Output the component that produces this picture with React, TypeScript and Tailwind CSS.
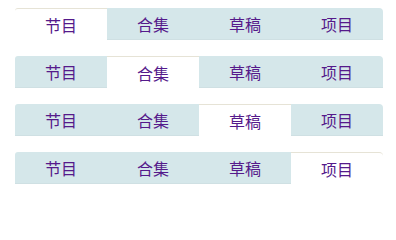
import React from "react";

const tabs = ["节目", "合集", "草稿", "项目"];

function TabBar({ active }: { active: number }) {
  return (
    <div className="flex w-[368px] h-8">
      {tabs.map((t, i) => (
        <div
          key={t}
          className={
            "w-[92px] h-8 flex items-center justify-center text-[16px] leading-none text-[#551a8b] " +
            (i === active
              ? "bg-white border-t border-[#e6e3d6]"
              : "bg-[#d5e7ea] border-b border-[#cfe0e3]") +
            (i === 0 ? " rounded-tl-[3px]" : "") +
            (i === tabs.length - 1 ? " rounded-tr-[4px]" : "")
          }
        >
          {t}
        </div>
      ))}
    </div>
  );
}

export default function App() {
  return (
    <div
      className="w-[396px] h-[201px] bg-white pt-2 pl-[15px] flex flex-col gap-4"
      style={{ fontFamily: '"Noto Sans CJK SC", "Noto Sans", sans-serif' }}
    >
      {[0, 1, 2, 3].map((a) => (
        <TabBar key={a} active={a} />
      ))}
    </div>
  );
}
